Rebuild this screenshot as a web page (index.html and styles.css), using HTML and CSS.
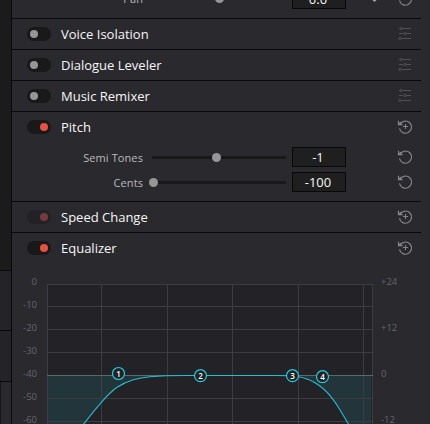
FILE: index.html
```
<!DOCTYPE html>
<html lang="en">
<head>
<meta charset="utf-8">
<title>Inspector</title>
<link rel="stylesheet" href="styles.css">
</head>
<body>
<svg class="defs" width="0" height="0" aria-hidden="true">
  <defs>
    <symbol id="sliders" viewBox="0 0 14 14">
      <path d="M1 1.5H1.5M4 1.5H13M1 6.5H5M8 6.5H13M3.5 11.5H13"/>
      <circle cx="3" cy="1.5" r="1.1"/><circle cx="7" cy="6.5" r="1.1"/><circle cx="2" cy="11.5" r="1.1"/>
    </symbol>
    <symbol id="reset" viewBox="0 0 16 16">
      <path d="M3.3 4.9A6.1 6.1 0 1 1 2.5 9.3M1.5 1.8V5.6H5.6M1.7 5.3L4.2 3.2"/>
    </symbol>
    <symbol id="reset-all" viewBox="0 0 16 16">
      <path d="M3.3 4.9A6.1 6.1 0 1 1 2.5 9.3M1.5 1.8V5.6H5.6M1.7 5.3L4.2 3.2"/>
      <path class="thin" d="M8.5 5V10M6 7.5H11"/>
    </symbol>
  </defs>
</svg>
<div class="app">
  <aside class="rail"><div class="rail-top"></div><div class="rail-a"></div><div class="rail-b"></div><div class="rail-c"></div></aside>
  <main class="inspector">
    <section class="section pan">
      <div class="param">
        <span class="label">Pan</span>
        <span class="slider mid"><i></i></span>
        <span class="value">0.0</span>
        <span class="keyframe"></span>
        <svg class="icon reset"><use href="#reset"/></svg>
      </div>
    </section>
    <section class="section"><header><span class="toggle"></span><h2>Voice Isolation</h2><svg class="icon sliders"><use href="#sliders"/></svg></header></section>
    <section class="section"><header><span class="toggle"></span><h2>Dialogue Leveler</h2><svg class="icon sliders"><use href="#sliders"/></svg></header></section>
    <section class="section"><header><span class="toggle"></span><h2>Music Remixer</h2><svg class="icon sliders"><use href="#sliders"/></svg></header></section>
    <section class="section pitch">
      <header><span class="toggle on"></span><h2>Pitch</h2><svg class="icon reset"><use href="#reset-all"/></svg></header>
      <div class="param"><span class="label">Semi Tones</span><span class="slider semi"><i></i></span><span class="value">-1</span><svg class="icon reset"><use href="#reset"/></svg></div>
      <div class="param"><span class="label">Cents</span><span class="slider cents"><i></i></span><span class="value">-100</span><svg class="icon reset"><use href="#reset"/></svg></div>
    </section>
    <section class="section"><header><span class="toggle on dim"></span><h2>Speed Change</h2><svg class="icon reset"><use href="#reset-all"/></svg></header></section>
    <section class="equalizer">
      <header><span class="toggle on"></span><h2>Equalizer</h2><svg class="icon reset"><use href="#reset-all"/></svg></header>
      <div class="graph">
        <div class="scale left"><span>0</span><span>-10</span><span>-20</span><span>-30</span><span>-40</span><span>-50</span><span>-60</span></div>
        <svg class="plot" width="326" height="141" viewBox="0 0 326 141">
          <rect width="326" height="141" fill="#232227"/>
          <path class="fill" d="M1 91.500H140C125 91.500 112 91.900 103 92.700C97 93.200 92 94 86.300 95.700C80 97.600 75 100 69.700 103.500C64 107.500 59 113 54.300 118.300C48 125.500 42 133 36 141H1ZM324 91.500H230C238 91.500 245 92 251 92.700C258 93.700 263 95.700 268 98.700C274 102.300 279 106.500 283 111.700C286 115.500 289 119.500 291 122.700C295 129 299 136 302 141H324Z"/>
          <path class="grid" d="M0 .5H326M0 22.5H326M0 45.5H326M0 68.5H326M0 114.5H326M0 137.5H326M.5 0V141M54.5 0V141M120.5 0V141M185.5 0V141M251.5 0V141M316.5 0V141M325.5 0V141"/>
          <path class="zero" d="M0 91.500H326"/>
          <path class="curve" d="M36 141C42 133 48 125.500 54.300 118.300C59 113 64 107.500 69.700 103.500C75 100 80 97.600 86.300 95.700C92 94 97 93.200 103 92.700C112 91.900 125 91.500 140 91.500H230C238 91.500 245 92 251 92.700C258 93.700 263 95.700 268 98.700C274 102.300 279 106.500 283 111.700C286 115.500 289 119.500 291 122.700C295 129 299 136 302 141"/>
          <g class="node"><circle cx="71.500" cy="89.500" r="6"/><text x="71.500" y="92.500">1</text></g>
          <g class="node"><circle cx="153.500" cy="91.700" r="6"/><text x="153.500" y="94.700">2</text></g>
          <g class="node"><circle cx="245.500" cy="91.700" r="6"/><text x="245.500" y="94.700">3</text></g>
          <g class="node"><circle cx="275.500" cy="92.700" r="6"/><text x="275.500" y="95.700">4</text></g>
        </svg>
        <div class="scale right"><span>+24</span><span>+12</span><span>0</span><span>-12</span></div>
      </div>
    </section>
  </main>
</div>
</body>
</html>
```

FILE: styles.css
```
* { box-sizing: border-box; }
html, body { margin: 0; height: 100%; overflow: hidden; }
body { background: #2a292e; font-family: "Open Sans", sans-serif; color: #f6f6f6; }
.defs { display: block; }
.app { display: flex; width: 430px; height: 424px; }
.rail { width: 12px; border-right: 1px solid #0a0a0c; display: flex; flex-direction: column; }
.rail-top { height: 271px; background: #1b1b1b; border-bottom: 1px solid #09090b; }
.rail-a { height: 60px; background: #242328; border-bottom: 1px solid #09090b; }
.rail-b { height: 51px; background: #242328; border-bottom: 1px solid #09090b; }
.rail-c { flex: 1; background: #2a292e; border-left: 1px solid #17171a; }
.inspector { width: 409px; height: 424px; }
.section { border-bottom: 1px solid #09090b; }
.pan { height: 19px; display: flex; align-items: flex-end; padding-bottom: 7px; }
header { height: 30px; display: flex; align-items: center; padding: 0 8px 0 15px; }
.toggle { width: 24px; height: 14px; border-radius: 7px; background: #191919; padding: 3px; display: flex; }
.toggle::after { content: ""; width: 8px; height: 8px; border-radius: 50%; background: #969696; }
.toggle.on { justify-content: flex-end; }
.toggle.on::after { background: #ea4f3f; }
.dim { background: #222125; }
.dim.on::after { background: #793a3b; }
h2 { margin: 0 auto 0 10px; font-size: 13px; font-weight: 400; line-height: 18px; white-space: nowrap; }
.icon { fill: none; stroke: #85848a; stroke-width: 1.2; flex: none; }
.icon.reset { width: 16px; height: 16px; }
.icon.sliders { width: 14px; height: 14px; stroke: #525156; stroke-width: 1; margin-right: 1px; }
.thin { stroke-width: 1; }
.pitch { height: 90px; }
.pitch header { margin-bottom: 3px; }
.param { height: 25px; width: 401px; display: flex; align-items: center; flex: none; }
.param .reset { margin-left: auto; }
.pitch .param .reset { margin-bottom: 2px; }
.label { width: 131px; text-align: right; font-size: 11px; letter-spacing: .1px; line-height: 16px; color: #b9b9bc; }
.slider { width: 134px; height: 9px; margin-left: 9px; display: flex; align-items: center; background: linear-gradient(#19191b, #19191b) center / 100% 3px no-repeat; }
.slider i { width: 9px; height: 9px; border-radius: 50%; background: #969696; }
.semi i { margin-left: 60px; }
.mid i { margin-left: 63px; }
.cents i { margin-left: -3px; }
.value { width: 54px; height: 20px; margin-left: 6px; border: 1px solid #08080a; background: #1f1f20; text-align: center; font-size: 13px; line-height: 18px; padding-right: 2px; }
.pitch .value { margin-top: -1px; line-height: 19px; }
.keyframe { width: 5px; height: 5px; margin-left: 26px; background: #a7a7a9; transform: rotate(45deg); }
.equalizer .graph { display: flex; margin-top: 21px; height: 141px; }
.scale { font-size: 9.5px; line-height: 14px; color: #67666c; display: flex; flex-direction: column; }
.left { width: 35px; padding-right: 10px; text-align: right; margin-top: -9px; gap: 9px; }
.right { padding-left: 8px; margin-top: -9px; gap: 32px; }
.plot { display: block; flex: none; }
.grid { stroke: #3c3d42; fill: none; }
.fill { fill: #22353b; }
.zero { stroke: #596970; }
.curve { fill: none; stroke: #25bfd0; stroke-width: 1.1; }
.node circle { fill: #222126; stroke: #25cbdc; stroke-width: 1.2; }
.node text { fill: #fff; font-size: 8px; font-weight: 600; text-anchor: middle; }
```
